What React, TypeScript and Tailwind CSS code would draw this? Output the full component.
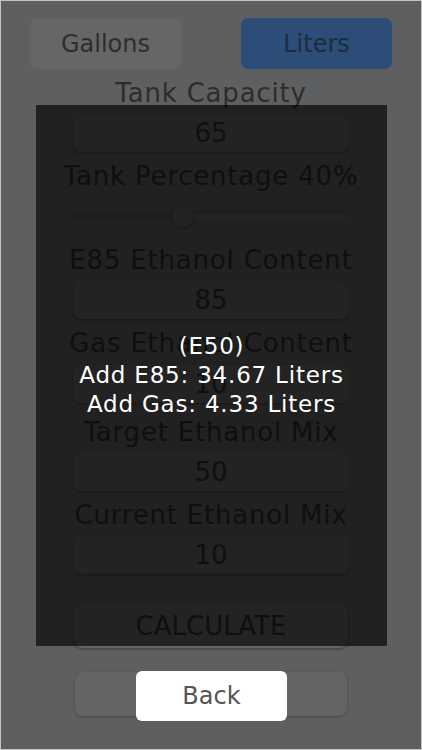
import React from "react";

const labels = [
  "Tank Capacity",
  "Tank Percentage 40%",
  "E85 Ethanol Content",
  "Gas Ethanol Content",
  "Target Ethanol Mix",
  "Current Ethanol Mix",
];

const font = { fontFamily: '"DejaVu Sans", "Liberation Sans", sans-serif' };

function Label({ text, className }: { text: string; className: string }) {
  return (
    <div className={`h-[28px] text-[26px] leading-[28px] tracking-[0.8px] text-[#2c2c2c] ${className}`}>
      {text}
    </div>
  );
}

function Field({ value }: { value: string }) {
  return (
    <div className="mx-[72px] flex h-[38px] items-center justify-center rounded-[8px] bg-[#646464] text-[26px] text-[#2c2c2c] shadow-[0_1px_3px_rgba(0,0,0,0.35)]">
      {value}
    </div>
  );
}

function Slider({ pct }: { pct: number }) {
  return (
    <div className="relative mx-[72px] flex h-[24px] items-center">
      <div className="h-[10px] w-full rounded-full bg-[#656565] shadow-[inset_0_1px_2px_rgba(0,0,0,0.3)]">
        <div className="h-full rounded-l-full bg-[#5a5a5a]" style={{ width: `${pct}%` }} />
      </div>
      <div
        className="absolute top-[1px] h-[22px] w-[22px] -translate-x-1/2 rounded-full bg-[#636363] shadow-[0_1px_3px_rgba(0,0,0,0.4)]"
        style={{ left: `${pct}%` }}
      />
    </div>
  );
}

export default function App() {
  return (
    <div
      className="relative h-[750px] w-[422px] overflow-hidden border border-[#c4c4c4] bg-[#5e5f60]"
      style={font}
    >
      <div className="flex justify-between px-[29px] pt-[17px]">
        <div className="flex h-[51px] w-[151px] items-center justify-center rounded-[7px] bg-[#666666] text-[24px] text-[#2e2e2e]">
          Gallons
        </div>
        <div className="flex h-[51px] w-[151px] items-center justify-center rounded-[7px] bg-[#2b4d78] text-[24px] text-[#1d2c3f]">
          Liters
        </div>
      </div>

      <div className="mt-[10px] flex flex-col text-center">
        <Label text={labels[0]} className="" />
        <div className="mt-[7px]">
          <Field value="65" />
        </div>
        <Label text={labels[1]} className="mt-[10px]" />
        <div className="mt-[14px]">
          <Slider pct={40} />
        </div>
        <Label text={labels[2]} className="mt-[18px]" />
        <div className="mt-[7px]">
          <Field value="85" />
        </div>
        <Label text={labels[3]} className="mt-[10px]" />
        <div className="mt-[8px]">
          <Field value="10" />
        </div>
        <Label text={labels[4]} className="mt-[15px]" />
        <div className="mt-[7px]">
          <Field value="50" />
        </div>
        <Label text={labels[5]} className="mt-[10px]" />
        <div className="mt-[7px]">
          <Field value="10" />
        </div>
        <div className="mx-[73px] mt-[30px] flex h-[44px] items-center justify-center rounded-[8px] bg-[#646464] text-[26px] text-[#2c2c2c] shadow-[0_1px_3px_rgba(0,0,0,0.35)]">
          CALCULATE
        </div>
        <div className="mx-[74px] mt-[24px] h-[44px] rounded-[8px] bg-[#646464] shadow-[0_1px_3px_rgba(0,0,0,0.25)]" />
      </div>

      {/* result toast */}
      <div className="absolute left-[35px] top-[104px] flex h-[541px] w-[351px] flex-col items-center justify-center bg-black/[0.65] text-[23px] leading-[29px] tracking-[0.8px] text-white">
        <div>(E50)</div>
        <div>Add E85: 34.67 Liters</div>
        <div>Add Gas: 4.33 Liters</div>
      </div>

      <div className="absolute left-[135px] top-[670px] flex h-[50px] w-[151px] items-center justify-center rounded-[6px] bg-white text-[24px] text-[#555555]">
        Back
      </div>
    </div>
  );
}
